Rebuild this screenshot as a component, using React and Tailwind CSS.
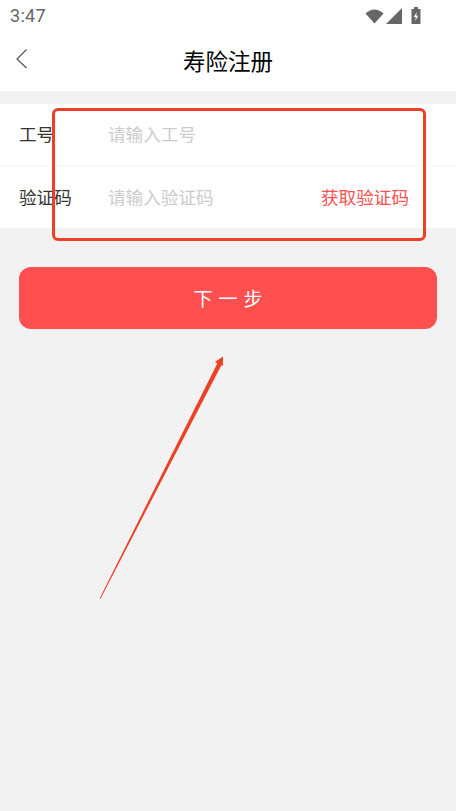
import React from 'react';

const fontStack = { fontFamily: '"Noto Sans CJK SC", sans-serif' };

function StatusIcons() {
  return (
    <div className="flex items-center mr-[35px]">
      {/* wifi */}
      <svg width="19" height="16" viewBox="0 0 19 16" className="mr-[2px]">
        <path d="M0.5 5.5 Q9.5 -2.5 18.5 5.5 L9.5 15.5 Z" fill="#666666" />
      </svg>
      {/* signal */}
      <svg width="16" height="16" viewBox="0 0 16 16" className="mr-[9px]">
        <path d="M0 16 L16 0 V16 Z" fill="#666666" />
      </svg>
      {/* battery */}
      <svg width="10" height="17" viewBox="0 0 10 17">
        <path d="M3 0 H7 V2 H9.5 V17 H0.5 V2 H3 Z" fill="#666666" />
        <path d="M5.8 5 L2.8 10 H4.8 L4.2 14 L7.2 8.8 H5.2 Z" fill="#ffffff" />
      </svg>
    </div>
  );
}

function Row({ label, placeholder, action, border }) {
  return (
    <div className={`flex items-center h-[62px] pl-[19px] pr-[47px] text-[17.6px] ${border ? 'border-b border-[#f6f6f6]' : ''}`}>
      <span className="w-[89px] text-[#333333]">{label}</span>
      <span className="flex-1 text-[#cccccc]">{placeholder}</span>
      {action && <span className="text-[#ff4f4f]">{action}</span>}
    </div>
  );
}

export default function App() {
  return (
    <div className="relative h-[811px] w-[456px] overflow-hidden bg-[#f2f2f2]" style={fontStack}>
      <div className="bg-white">
        <div className="flex items-center justify-between h-[31px] pl-[10px]">
          <span className="text-[18px] text-[#666666] tracking-[0.3px]" style={{ fontFamily: 'Roboto, sans-serif' }}>3:47</span>
          <StatusIcons />
        </div>
        <div className="relative flex items-center justify-center h-[60px]">
          <svg width="14" height="22" viewBox="0 0 14 22" className="absolute left-[15px] top-[17px]">
            <path d="M11.5 1.5 L2 11 L11.5 20" fill="none" stroke="#555555" strokeWidth="1.2" />
          </svg>
          <span className="text-[22.5px] text-black">寿险注册</span>
        </div>
      </div>

      <div className="mt-[13px] bg-white">
        <Row label="工号" placeholder="请输入工号" border />
        <Row label="验证码" placeholder="请输入验证码" action="获取验证码" />
      </div>

      <div className="mx-[19px] mt-[39px] flex h-[62px] items-center justify-center rounded-[12px] bg-[#ff4f4f]">
        <span className="mr-[-6px] text-[19px] text-white tracking-[6px]">下一步</span>
      </div>

      {/* red annotation box */}
      <div className="absolute left-[52px] top-[108px] h-[133px] w-[374px] rounded-[6px] border-[3.5px] border-[#ee4025]" />

      {/* red annotation arrow */}
      <svg width="456" height="811" viewBox="0 0 456 811" className="absolute left-0 top-0 pointer-events-none">
        <path d="M99.6 598.5 L100.4 599 L222 364 L218 362 Z" fill="#ee4025" />
        <path d="M223 356.5 L223 366 L215 362 Z" fill="#ee4025" />
      </svg>
    </div>
  );
}
